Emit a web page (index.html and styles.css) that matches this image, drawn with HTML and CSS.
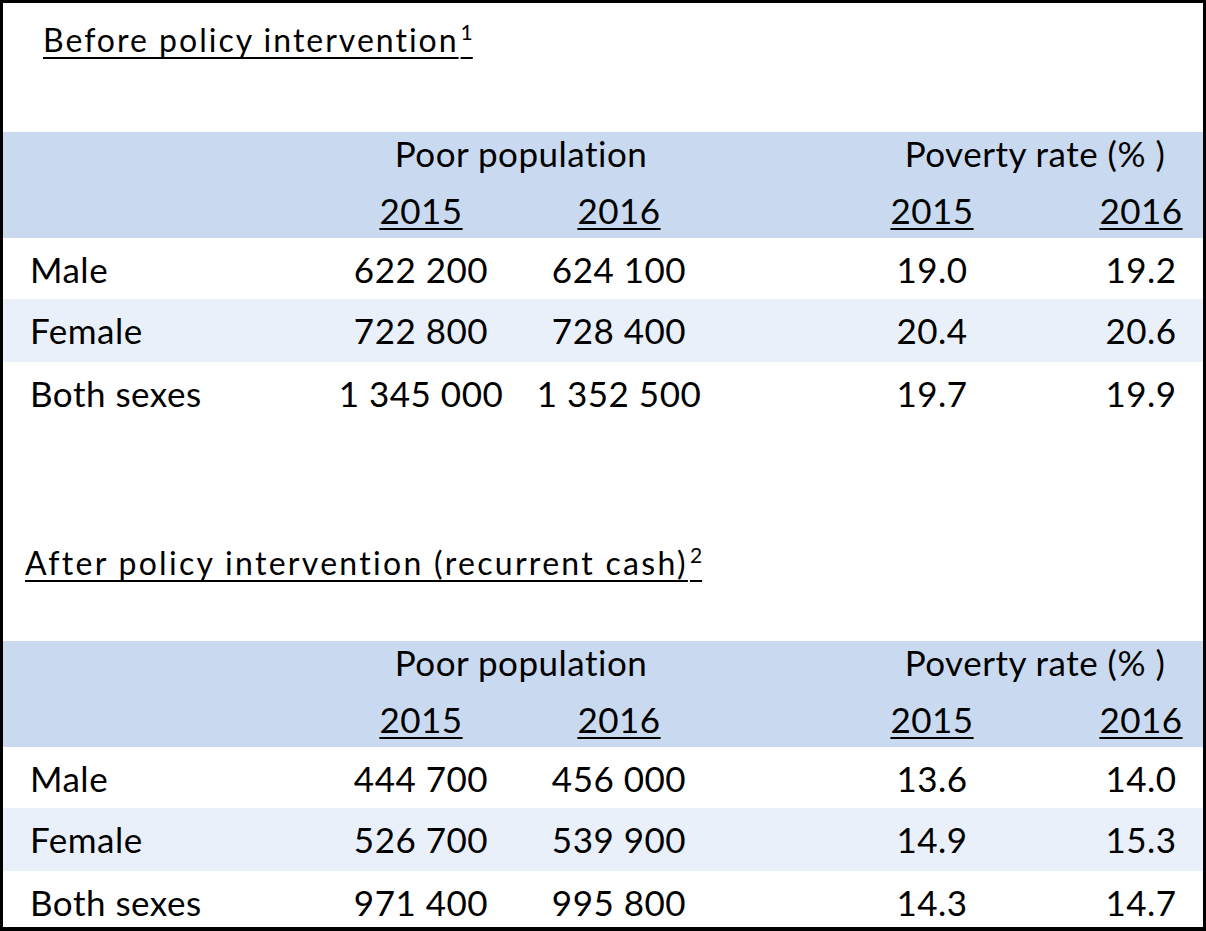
FILE: index.html
```html
<!DOCTYPE html>
<html>
<head>
<meta charset="utf-8">
<link rel="stylesheet" href="styles.css">
</head>
<body>
<div class="frame">
  <section class="section section-before">
    <h2 class="title"><span class="title-text">Before policy intervention<sup class="note">1</sup></span></h2>
    <div class="row head head-1">
      <div class="cell group group-pop">Poor population</div>
      <div class="cell group group-rate">Poverty rate (% )</div>
    </div>
    <div class="row head head-2">
      <div class="cell label"></div>
      <div class="cell year c1">2015</div>
      <div class="cell year c2">2016</div>
      <div class="cell year c3">2015</div>
      <div class="cell year c4">2016</div>
    </div>
    <div class="row data r-a">
      <div class="cell label">Male</div>
      <div class="cell c1">622 200</div>
      <div class="cell c2">624 100</div>
      <div class="cell c3">19.0</div>
      <div class="cell c4">19.2</div>
    </div>
    <div class="row data r-b alt">
      <div class="cell label">Female</div>
      <div class="cell c1">722 800</div>
      <div class="cell c2">728 400</div>
      <div class="cell c3">20.4</div>
      <div class="cell c4">20.6</div>
    </div>
    <div class="row data r-c">
      <div class="cell label">Both sexes</div>
      <div class="cell c1">1 345 000</div>
      <div class="cell c2">1 352 500</div>
      <div class="cell c3">19.7</div>
      <div class="cell c4">19.9</div>
    </div>
  </section>
  <section class="section section-after">
    <h2 class="title"><span class="title-text">After policy intervention (recurrent cash)<sup class="note">2</sup></span></h2>
    <div class="row head head-1">
      <div class="cell group group-pop">Poor population</div>
      <div class="cell group group-rate">Poverty rate (% )</div>
    </div>
    <div class="row head head-2">
      <div class="cell label"></div>
      <div class="cell year c1">2015</div>
      <div class="cell year c2">2016</div>
      <div class="cell year c3">2015</div>
      <div class="cell year c4">2016</div>
    </div>
    <div class="row data r-a">
      <div class="cell label">Male</div>
      <div class="cell c1">444 700</div>
      <div class="cell c2">456 000</div>
      <div class="cell c3">13.6</div>
      <div class="cell c4">14.0</div>
    </div>
    <div class="row data r-b alt">
      <div class="cell label">Female</div>
      <div class="cell c1">526 700</div>
      <div class="cell c2">539 900</div>
      <div class="cell c3">14.9</div>
      <div class="cell c4">15.3</div>
    </div>
    <div class="row data r-c">
      <div class="cell label">Both sexes</div>
      <div class="cell c1">971 400</div>
      <div class="cell c2">995 800</div>
      <div class="cell c3">14.3</div>
      <div class="cell c4">14.7</div>
    </div>
  </section>
</div>
</body>
</html>
```

FILE: styles.css
```css
* { box-sizing: border-box; }
html, body { margin: 0; padding: 0; background: #fff; }
body {
  font-family: "Lato", "Liberation Sans", sans-serif;
  color: #000;
}
.frame {
  width: 1206px;
  height: 931px;
  border: 3px solid #000;
  border-bottom-width: 4px;
  overflow: hidden;
  display: flex;
  flex-direction: column;
}
.title {
  margin: 0;
  font-weight: 400;
  font-size: 32px;
  letter-spacing: 2px;
  line-height: 40px;
  padding-left: 40px;
}
.section-before .title { height: 129px; padding-top: 17px; }
.section-after .title { height: 217px; padding-top: 119px; padding-left: 22px; }
.section-after .title-text { letter-spacing: 2.3px; }
.title-text {
  text-decoration: underline;
  text-decoration-thickness: 2px;
  text-underline-offset: 5px;
}
.note {
  font-size: 21px;
  letter-spacing: 0;
  line-height: 0;
  vertical-align: 12px;
  margin-left: 2px;
}
.row {
  display: grid;
  grid-template-columns: 320px 196px 200px 110px 206px 44px 124px;
  font-size: 35px;
  letter-spacing: 0.5px;
}
.cell { white-space: nowrap; text-align: center; }
.label { text-align: left; padding-left: 27px; }
.c1 { grid-column: 2; }
.c2 { grid-column: 3; }
.c3 { grid-column: 5; }
.c4 { grid-column: 7; }
.head { background: #c9daf0; }
.head-1 { height: 42px; line-height: 42px; }
.group-pop { grid-column: 2 / 4; }
.group-rate { grid-column: 5 / 8; padding-left: 38px; }
.head-2 { height: 64px; line-height: 56px; padding-top: 8px; }
.year {
  text-decoration: underline;
  text-decoration-thickness: 2px;
  text-underline-offset: 4px;
}
.data { line-height: 62px; }
.r-a { height: 61px; }
.r-b { height: 63px; }
.r-c { height: 62px; }
.section-after .r-c { height: 57px; }
.alt { background: #e9f0fa; }
```
